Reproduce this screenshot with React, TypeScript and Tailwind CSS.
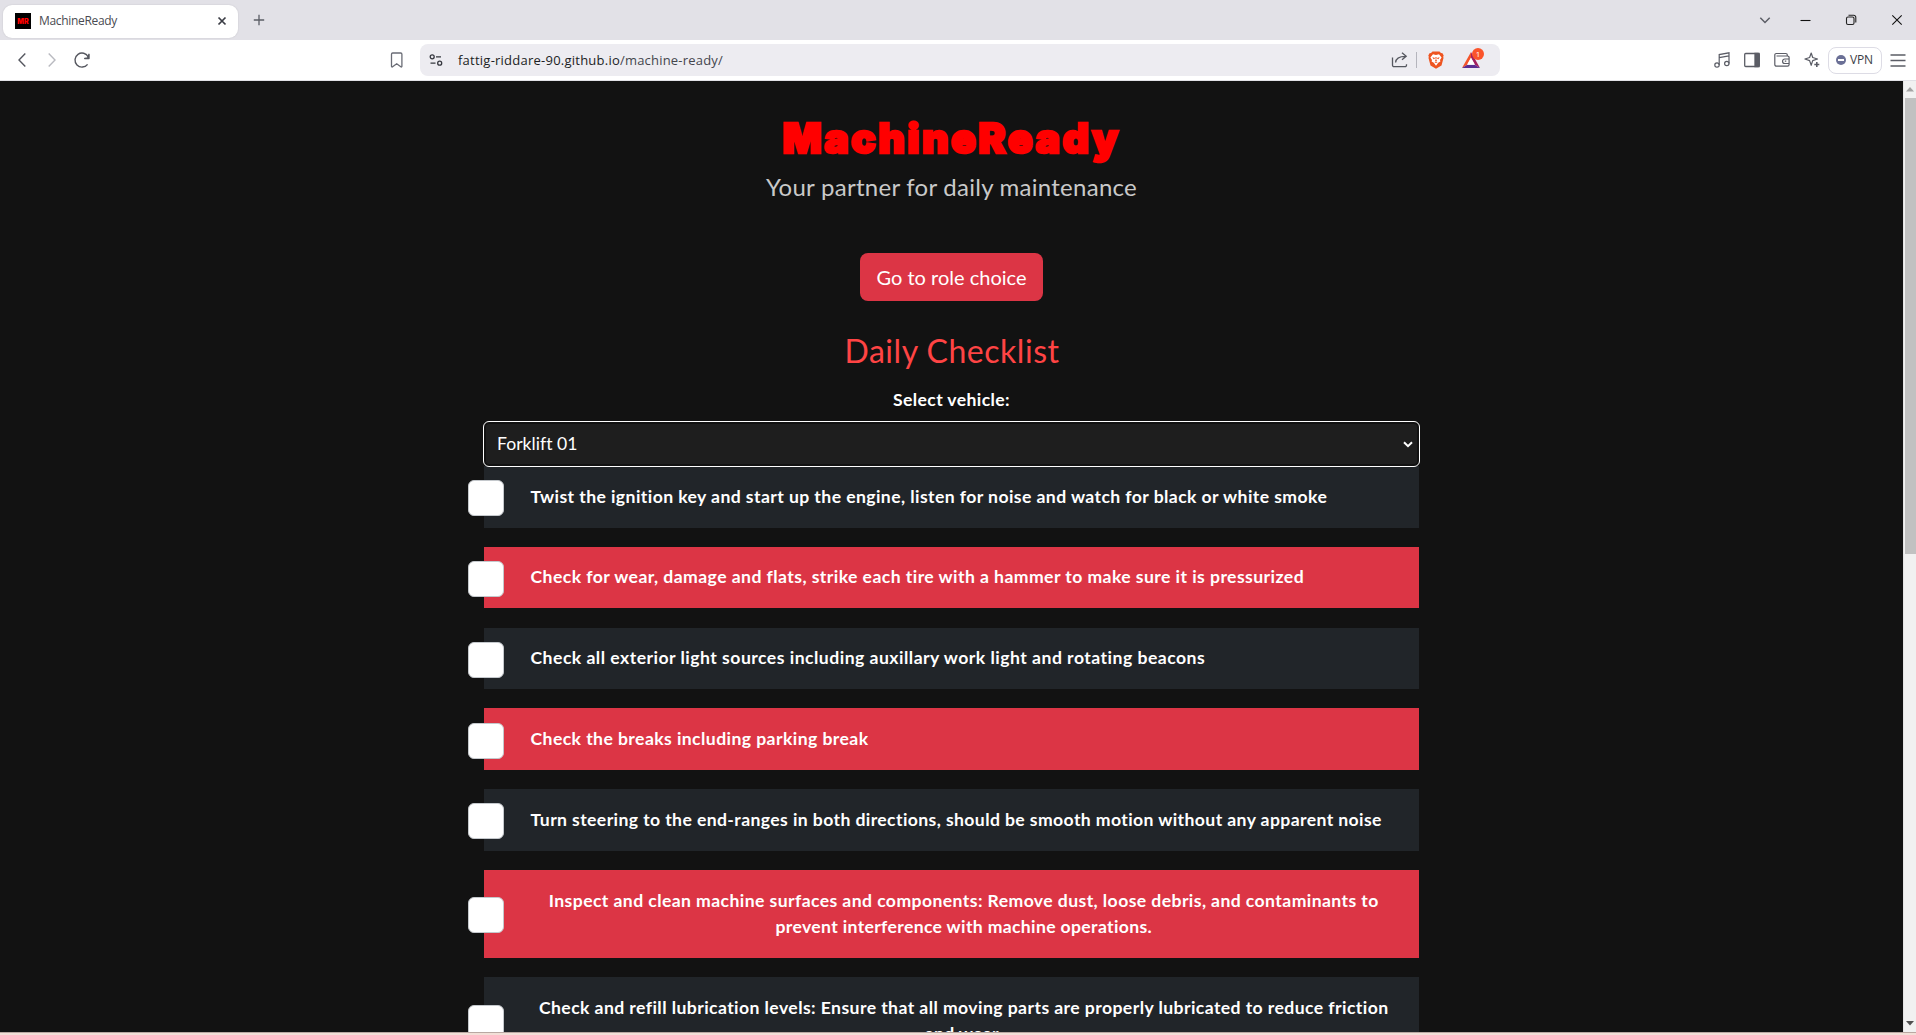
import { useLayoutEffect, useRef, useState } from "react";

/* A single line of text whose letter spacing is adjusted to fill a given width. */
function Line({ text, width, className = "" }: { text: string; width: number; className?: string }) {
  const ref = useRef<HTMLSpanElement>(null);
  const [spacing, setSpacing] = useState(0);
  useLayoutEffect(() => {
    const el = ref.current;
    if (el) setSpacing((width - el.getBoundingClientRect().width) / text.length);
  }, [text, width]);
  return (
    <span ref={ref} className={"inline-block whitespace-nowrap " + className} style={{ letterSpacing: `${spacing}px` }}>
      {text}
    </span>
  );
}

type Item = { lines: [string, number][] };

const items: Item[] = [
  { lines: [["Twist the ignition key and start up the engine, listen for noise and watch for black or white smoke", 797]] },
  { lines: [["Check for wear, damage and flats, strike each tire with a hammer to make sure it is pressurized", 774]] },
  { lines: [["Check all exterior light sources including auxillary work light and rotating beacons", 675]] },
  { lines: [["Check the breaks including parking break", 338]] },
  { lines: [["Turn steering to the end-ranges in both directions, should be smooth motion without any apparent noise", 852]] },
  {
    lines: [
      ["Inspect and clean machine surfaces and components: Remove dust, loose debris, and contaminants to", 830],
      ["prevent interference with machine operations.", 377],
    ],
  },
  {
    lines: [
      ["Check and refill lubrication levels: Ensure that all moving parts are properly lubricated to reduce friction", 850],
      ["and wear.", 78],
    ],
  },
];

function TabBar() {
  return (
    <div className="flex h-10 items-center bg-[#e2e1e7] pl-[3px]">
      <div className="mt-0.5 flex h-[33px] w-[235px] items-center rounded-[9px] bg-white pl-3 pr-[11px] shadow-[0_0_2px_rgba(0,0,0,0.12)]">
        <div className="flex size-4 items-center justify-center bg-black">
          <span className="font-['Inter'] text-[7px] leading-none font-black text-[#f00]">MR</span>
        </div>
        <Line text="MachineReady" width={78} className="ml-2 text-[12px] text-[#4a4b52]" />
        <svg className="ml-auto size-[10px]" viewBox="0 0 10 10" fill="none" stroke="#3b3d45" strokeWidth="1.7">
          <path d="M1.5 1.5l7 7M8.5 1.5l-7 7" />
        </svg>
      </div>
      <svg className="ml-[15px] size-3" viewBox="0 0 12 12" fill="none" stroke="#5b5d66" strokeWidth="1.3">
        <path d="M6 .8v10.4M.8 6h10.4" />
      </svg>
      <div className="ml-auto flex items-center">
        <svg className="h-3 w-3" viewBox="0 0 12 12" fill="none" stroke="#5b5d66" strokeWidth="1.5">
          <path d="M1.3 3.8L6 8.5l4.700-4.700" />
        </svg>
        <svg className="ml-[29px] h-3 w-[11px]" viewBox="0 0 11 12" stroke="#111" strokeWidth="1.1">
          <path d="M.5 6.500h10" />
        </svg>
        <svg className="ml-[34px] size-3" viewBox="0 0 12 12" fill="none" stroke="#222" strokeWidth="1.1">
          <rect x="1.500" y="3" width="7.500" height="7.500" rx="1.500" />
          <path d="M3.500 1.300h5.200a2.100 2.100 0 0 1 2.100 2.100v5" />
        </svg>
        <svg className="mr-[13px] ml-[34px] size-3" viewBox="0 0 12 12" fill="none" stroke="#111" strokeWidth="1.1">
          <path d="M1.300 1.300l9.400 9.400M10.700 1.300l-9.400 9.400" />
        </svg>
      </div>
    </div>
  );
}

function Toolbar() {
  return (
    <div className="flex h-[41px] items-center border-b border-[#e1e1e6] bg-white">
      <svg className="ml-[17px] h-4 w-[10px]" viewBox="0 0 10 16" fill="none" stroke="#55575f" strokeWidth="1.4">
        <path d="M8.300 1.500L2 8l6.300 6.500" />
      </svg>
      <svg className="ml-[20px] h-4 w-[10px]" viewBox="0 0 10 16" fill="none" stroke="#b9bac0" strokeWidth="1.4">
        <path d="M1.700 1.500L8 8l-6.300 6.500" />
      </svg>
      <svg className="ml-[16px] size-[18px]" viewBox="0 0 18 18" fill="none" stroke="#55575f" strokeWidth="1.400">
        <path d="M15.300 6A7 7 0 1 0 14.600 13.300" />
        <path d="M16 3.300v4.200h-4.300l3-.6z" fill="#55575f" strokeLinejoin="round" />
      </svg>
      <svg className="ml-[299px] h-4 w-[14px]" viewBox="0 0 14 16" fill="none" stroke="#6a6c75" strokeWidth="1.300">
        <path d="M1.500 2.200a1.200 1.200 0 0 1 1.200-1.200h8a1.200 1.200 0 0 1 1.200 1.200v12.100c0 .6-.6.9-1.100.5L6.700 11.800l-4.100 3c-.5.400-1.100.1-1.100-.5z" />
      </svg>
      <div className="ml-[16px] flex h-8 w-[1080px] items-center rounded-lg bg-[#edecf1]">
        <svg className="ml-[9px] size-[14px]" viewBox="0 0 14 14" fill="none" stroke="#36383f" strokeWidth="1.300">
          <circle cx="3.200" cy="3.800" r="2" />
          <path d="M7 3.800h5M1.500 10.200h5" />
          <circle cx="10.700" cy="10.200" r="2" />
        </svg>
        <Line text="fattig-riddare-90.github.io" width={162} className="mt-0.5 ml-[15px] text-[13px] text-[#1c1e24]" />
        <Line text="/machine-ready/" width={103} className="mt-0.5 text-[13px] text-[#44464d]" />
        <svg className="ml-auto h-4 w-[18px]" viewBox="0 0 18 16" fill="none" stroke="#55575f" strokeWidth="1.300">
          <path d="M1.500 5.500v7.700a1.500 1.500 0 0 0 1.500 1.500h11a1.500 1.500 0 0 0 1.500-1.500v-1" />
          <path d="M4.600 10.500c.2-3.900 3.200-6.200 9.900-6.200M11 .8l4.200 3.500L11 7.800" />
        </svg>
        <div className="ml-[7px] h-4 w-px bg-[#b5b5bd]" />
        <svg className="ml-[11px] h-[18px] w-4" viewBox="0 0 16 18">
          <path d="M4.500.4h7L13 2l1.500.2 1.200 2.300-.5 1.300.3 1.200-2 7.500L8 17.800l-5.500-3.300L.5 7l.3-1.200L.3 4.500l1.200-2.300L3 2z" fill="#ee5420" />
          <path d="M5 3.300l3 .6 3-.6 2.600 3.100-1.600 2.700.4 1.500-2.200 1.200L8 14.700l-2.200-2.900-2.200-1.200.4-1.500-1.600-2.700z" fill="#fff" />
          <path d="M4.300 6.300l2.200.4.4 1-1.300.5zM11.700 6.300l-2.200.4-.4 1 1.300.5zM7.400 6h1.200L8.300 9l.9.700L8 10.500l-1.200-.8.900-.7zM6.200 11.100L8 12.100l1.800-1-1.800-.3z" fill="#ee5420" />
        </svg>
        <div className="relative mr-[20px] ml-[18px] h-4 w-[18px]">
          <svg className="size-full" viewBox="0 0 18 16">
            <path d="M9 0L0 16l5.300-3.200L9 6z" fill="#f4542b" />
            <path d="M9 0v6l3.700 6.800L18 16z" fill="#a3205f" />
            <path d="M0 16h18l-5.300-3.200H5.300z" fill="#5c2d91" />
            <path d="M9 5.500l-4 7.300h8z" fill="#fff" />
          </svg>
          <span className="absolute -top-[4px] left-[10px] flex size-3 items-center justify-center rounded-full bg-[#fb542b] text-[8px] leading-none text-white">1</span>
        </div>
      </div>
      <div className="ml-auto flex items-center text-[#5b5d66]">
        <svg className="h-4 w-4" viewBox="0 0 16 16" fill="none" stroke="currentColor" strokeWidth="1.200">
          <circle cx="3" cy="13" r="2.200" />
          <circle cx="12.800" cy="11.500" r="2.200" />
          <path d="M5.200 13V2.600L15 .8v10.700M5.200 5.600L15 3.800" />
        </svg>
        <svg className="ml-[14px] h-4 w-4" viewBox="0 0 16 16" fill="none" stroke="currentColor" strokeWidth="1.300">
          <rect x=".7" y="1.500" width="14.600" height="13" rx="1" />
          <path d="M11 1.500h4v13h-4z" fill="currentColor" />
        </svg>
        <svg className="ml-[14px] h-4 w-4" viewBox="0 0 16 16" fill="none" stroke="currentColor" strokeWidth="1.200">
          <path d="M13.300 4V3a1.500 1.500 0 0 0-1.500-1.500H2.300A1.500 1.500 0 0 0 .8 3v9.500a1.700 1.700 0 0 0 1.700 1.700h11a1.600 1.600 0 0 0 1.600-1.600V5.700A1.600 1.600 0 0 0 13.500 4h-11M15.200 7H10.800a2 2 0 0 0 0 4.500h4.400M10.800 9.200h1.500" />
        </svg>
        <svg className="ml-[14px] h-4 w-4" viewBox="0 0 16 16" fill="none" stroke="currentColor" strokeWidth="1.200" strokeLinejoin="round">
          <path d="M7.200 1l1.500 4.500L13.500 7 8.700 8.600 7.200 13.300 5.600 8.600.9 7l4.700-1.500z" />
          <path d="M12.800 10v5M10.300 12.500h5" strokeWidth="1.600" />
        </svg>
        <div className="ml-[8px] flex h-[27px] w-[54px] items-center rounded-lg border border-[#dddce5] pl-[7px]">
          <div className="flex size-[10px] items-center justify-center rounded-full bg-[#6b7096]">
            <div className="h-[1.500px] w-[6px] bg-white" />
          </div>
          <Line text="VPN" width={23} className="ml-1 text-[12px] leading-none text-[#3b3d45]" />
        </div>
        <svg className="mr-[10px] ml-[8px] h-4 w-4" viewBox="0 0 16 16" stroke="currentColor" strokeWidth="1.300">
          <path d="M.5 3h15M.5 8.500h15M.5 14h15" />
        </svg>
      </div>
    </div>
  );
}

function ScrollBar() {
  return (
    <div className="flex w-[13px] flex-col items-center border-l border-[#e4e4e4] bg-[#f1f1f1]">
      <svg className="mt-[6px] h-[5px] w-[8px] shrink-0" viewBox="0 0 8 5"><path d="M4 0l4 4.500H0z" fill="#a3a3a3" /></svg>
      <div className="mt-[6px] h-[456px] w-[11px] bg-[#c1c1c1]" />
      <svg className="mt-auto mb-[6px] h-[5px] w-[8px] shrink-0" viewBox="0 0 8 5"><path d="M4 4.500L8 0H0z" fill="#505050" /></svg>
    </div>
  );
}

export default function App() {
  return (
    <div className="flex h-[1035px] w-[1916px] flex-col overflow-hidden font-['Open_Sans','Noto_Sans',sans-serif]">
      <TabBar />
      <Toolbar />
      <div className="flex h-[951px]">
        <main className="flex flex-1 flex-col items-center overflow-hidden bg-[#121212] font-['Lato',sans-serif] text-white *:shrink-0">
          <h1 className="mt-[26px] flex h-[62px] items-center">
            <Line text="MachineReady" width={338} className="font-['Inter',sans-serif] text-[41px] leading-none font-black text-[#f00] [-webkit-text-stroke:2.500px_#f00]" />
          </h1>
          <p className="flex h-9 items-center text-[#c9c9c9]">
            <Line text="Your partner for daily maintenance" width={371} className="text-[24px]" />
          </p>
          <button className="mt-[48px] flex h-12 w-[183px] items-center justify-center rounded-lg bg-[#dc3545]">
            <Line text="Go to role choice" width={150} className="text-[20px]" />
          </button>
          <h2 className="mt-[31px] flex h-[38px] items-center pl-px text-[#ff4444]">
            <Line text="Daily Checklist" width={215} className="text-[32px]" />
          </h2>
          <label className="mt-[17px] flex h-[26px] items-center">
            <Line text="Select vehicle:" width={117} className="text-[17.600px] font-bold" />
          </label>
          <div className="z-10 mt-[8px] h-[46px] w-[937px] rounded-[6px] border border-white bg-[#121212] p-[2px]">
            <div className="flex h-full items-center justify-between rounded-[3px] bg-[#1e1e1e] pr-[4px] pl-[11px]">
              <Line text="Forklift 01" width={80} className="text-[17.600px]" />
              <svg className="h-[7px] w-[10px]" viewBox="0 0 10 7" fill="none" stroke="#fff" strokeWidth="2">
                <path d="M1 1.200l4 4 4-4" />
              </svg>
            </div>
          </div>
          <ul className="-mt-px flex w-[935px] flex-col gap-[19.200px]">
            {items.map((item, i) => (
              <li
                key={i}
                className={
                  "relative flex flex-col py-[17.600px] pl-[46.500px] text-[17.600px] leading-[26.400px] font-bold " +
                  (i % 2 ? "bg-[#dc3545] " : "bg-[#212529] ") +
                  (item.lines.length > 1 ? "items-center pr-[22px]" : "items-start")
                }
              >
                <span className="absolute top-1/2 -left-[16px] -mt-[16.500px] size-[36px] rounded-[6px] border border-[#c4c8cc] bg-white" />
                {item.lines.map(([text, width]) => (
                  <Line key={text} text={text} width={width} />
                ))}
              </li>
            ))}
          </ul>
        </main>
        <ScrollBar />
      </div>
      <div className="h-[3px] border-t border-[#b9a8a2] bg-[#f2dfd7]" />
    </div>
  );
}
